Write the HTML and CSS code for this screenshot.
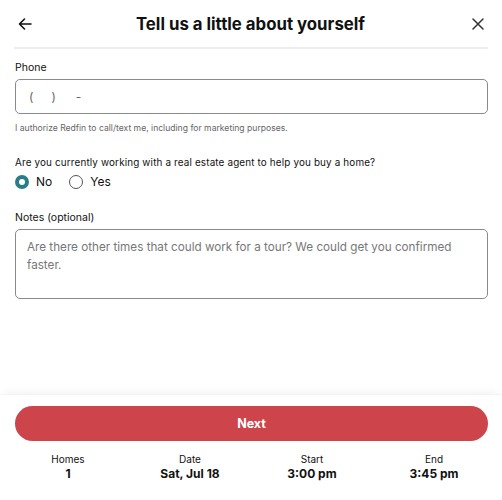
FILE: index.html
```html
<!DOCTYPE html>
<html>
	<head>
		<meta charset="utf-8" />
		<title>Tell us a little about yourself</title>
		<link rel="stylesheet" href="styles.css">
	</head>
	<body>
		<div class="sheet">
			<header class="top">
				<button class="icon-btn" aria-label="Back">
					<svg width="16" height="16" viewBox="0 0 16 16" fill="none" stroke="#111" stroke-width="1.6" stroke-linecap="round" stroke-linejoin="round">
						<path d="M14 8H2.5M7.5 3L2.5 8l5 5"/>
					</svg>
				</button>
				<h1 class="title">Tell us a little about yourself</h1>
				<button class="icon-btn" aria-label="Close">
					<svg width="14" height="14" viewBox="0 0 14 14" fill="none" stroke="#333" stroke-width="1.5" stroke-linecap="round">
						<path d="M2 2l10 10M12 2L2 12"/>
					</svg>
				</button>
			</header>

			<main class="form">
				<label class="label">Phone</label>
				<div class="field phone">
					<span>(</span><span class="gap">)</span><span class="dash">-</span>
				</div>
				<p class="hint">I authorize Redfin to call/text me, including for marketing purposes.</p>

				<p class="question">Are you currently working with a real estate agent to help you buy a home?</p>
				<div class="radios">
					<label class="radio"><span class="dot checked"></span>No</label>
					<label class="radio"><span class="dot"></span>Yes</label>
				</div>

				<label class="label notes-label">Notes (optional)</label>
				<div class="field notes">Are there other times that could work for a tour? We could get you confirmed faster.</div>
			</main>

			<footer class="bottom">
				<button class="next">Next</button>
				<div class="summary">
					<div class="cell"><span>Homes</span><b>1</b></div>
					<div class="cell"><span>Date</span><b>Sat, Jul 18</b></div>
					<div class="cell"><span>Start</span><b>3:00 pm</b></div>
					<div class="cell"><span>End</span><b>3:45 pm</b></div>
				</div>
			</footer>
		</div>
	</body>
</html>
```

FILE: styles.css
```css
*{
	margin: 0;
	padding: 0;
	box-sizing: border-box;
}

body{
	font-family: Inter, "Liberation Sans", sans-serif;
	color: #111;
	background: #fff;
}

.sheet{
	width: 502px;
	height: 500px;
	display: flex;
	flex-direction: column;
}

/* header */
.top{
	margin: 0 14px;
	height: 49px;
	display: flex;
	align-items: center;
	justify-content: space-between;
	border-bottom: 2px solid #ececec;
	padding: 0 0 0 1px;
}

.icon-btn{
	border: none;
	background: none;
	width: 20px;
	height: 20px;
	display: flex;
	align-items: center;
	justify-content: center;
}

.title{
	font-size: 16.8px;
	font-weight: 700;
	margin-right: 2px;
}

/* form */
.form{
	padding: 12px 14px 0 15px;
	flex: 1;
}

.label{
	display: block;
	font-size: 10.5px;
	line-height: 14px;
	color: #111;
}

.field{
	border: 1px solid #8a8a8a;
	border-radius: 5px;
	margin-top: 4px;
}

.phone{
	height: 35px;
	display: flex;
	align-items: center;
	padding-left: 13px;
	font-size: 12px;
	color: #666;
}

.phone .gap{
	margin-left: 18px;
}

.phone .dash{
	margin-left: 20px;
}

.hint{
	font-size: 8.6px;
	color: #666;
	margin-top: 8px;
	line-height: 12px;
}

.question{
	font-size: 9.9px;
	letter-spacing: 0.15px;
	margin-top: 21px;
	line-height: 14px;
}

.radios{
	display: flex;
	gap: 17px;
	margin-top: 5px;
}

.radio{
	display: flex;
	align-items: center;
	gap: 7px;
	font-size: 12px;
}

.dot{
	width: 14px;
	height: 14px;
	border-radius: 50%;
	border: 1.5px solid #555;
}

.dot.checked{
	border: 4.5px solid #2a7d87;
	background: #fff;
}

.notes-label{
	margin-top: 22px;
}

.notes{
	height: 70px;
	padding: 8px 11px;
	font-size: 11.7px;
	line-height: 18px;
	color: #777;
}

/* footer */
.bottom{
	padding: 11px 0 0;
	box-shadow: 0 -6px 8px -4px rgba(0,0,0,0.05);
	border-top: 1px solid #f4f4f4;
	height: 106px;
}

.next{
	display: block;
	margin: 0 14px 0 15px;
	width: 473px;
	height: 35px;
	border: none;
	border-radius: 18px;
	background: #cd444a;
	color: #fff;
	font-family: inherit;
	font-size: 12.5px;
	font-weight: 700;
}

.summary{
	display: grid;
	grid-template-columns: repeat(4, 1fr);
	padding: 0 7px;
	margin-top: 12px;
}

.cell{
	display: flex;
	flex-direction: column;
	align-items: center;
	font-size: 10px;
	line-height: 13px;
}

.cell b{
	font-size: 12px;
	font-weight: 700;
	line-height: 15px;
}
```
